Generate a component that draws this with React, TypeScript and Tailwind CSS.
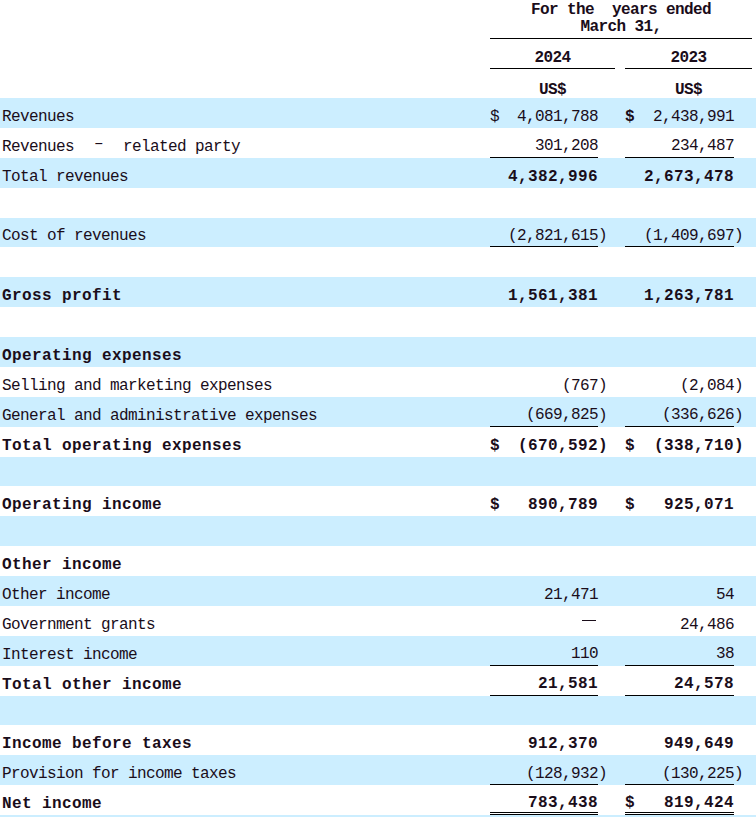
import React from "react";

type Cell = {
  v: string;
  dollar?: boolean;
  dollarBold?: boolean;
  paren?: boolean;
  line?: "single" | "double";
  dash?: boolean;
};

type Row = {
  label?: React.ReactNode;
  labelBold?: boolean;
  valBold?: boolean;
  a?: Cell;
  b?: Cell;
};

const rows: Row[] = [
  {
    label: "Revenues",
    a: { v: "4,081,788", dollar: true },
    b: { v: "2,438,991", dollar: true, dollarBold: true },
  },
  {
    label: (
      <>
        Revenues
        <span className="relative -top-[3px] mx-[20px]">–</span>
        related party
      </>
    ),
    a: { v: "301,208", line: "single" },
    b: { v: "234,487", line: "single" },
  },
  {
    label: "Total revenues",
    valBold: true,
    a: { v: "4,382,996" },
    b: { v: "2,673,478" },
  },
  {},
  {
    label: "Cost of revenues",
    a: { v: "(2,821,615", paren: true, line: "single" },
    b: { v: "(1,409,697", paren: true, line: "single" },
  },
  {},
  {
    label: "Gross profit",
    labelBold: true,
    valBold: true,
    a: { v: "1,561,381" },
    b: { v: "1,263,781" },
  },
  {},
  { label: "Operating expenses", labelBold: true },
  {
    label: "Selling and marketing expenses",
    a: { v: "(767", paren: true },
    b: { v: "(2,084", paren: true },
  },
  {
    label: "General and administrative expenses",
    a: { v: "(669,825", paren: true, line: "single" },
    b: { v: "(336,626", paren: true, line: "single" },
  },
  {
    label: "Total operating expenses",
    labelBold: true,
    valBold: true,
    a: { v: "(670,592", paren: true, dollar: true, dollarBold: true },
    b: { v: "(338,710", paren: true, dollar: true, dollarBold: true },
  },
  {},
  {
    label: "Operating income",
    labelBold: true,
    valBold: true,
    a: { v: "890,789", dollar: true, dollarBold: true },
    b: { v: "925,071", dollar: true, dollarBold: true },
  },
  {},
  { label: "Other income", labelBold: true },
  { label: "Other income", a: { v: "21,471" }, b: { v: "54" } },
  { label: "Government grants", a: { v: "—", dash: true }, b: { v: "24,486" } },
  {
    label: "Interest income",
    a: { v: "110", line: "single" },
    b: { v: "38", line: "single" },
  },
  {
    label: "Total other income",
    labelBold: true,
    valBold: true,
    a: { v: "21,581", line: "single" },
    b: { v: "24,578", line: "single" },
  },
  {},
  {
    label: "Income before taxes",
    labelBold: true,
    valBold: true,
    a: { v: "912,370" },
    b: { v: "949,649" },
  },
  {
    label: "Provision for income taxes",
    a: { v: "(128,932", paren: true, line: "single" },
    b: { v: "(130,225", paren: true, line: "single" },
  },
  {
    label: "Net income",
    labelBold: true,
    valBold: true,
    a: { v: "783,438", line: "double" },
    b: { v: "819,424", dollar: true, dollarBold: true, line: "double" },
  },
];

const Amount = ({
  cell,
  bold,
  wide,
}: {
  cell?: Cell;
  bold?: boolean;
  wide?: boolean;
}) => {
  const lineCls =
    cell?.line === "single"
      ? "border-b border-[#000]"
      : cell?.line === "double"
        ? "border-b-[3px] border-double border-[#000]"
        : "";
  return (
    <div className={`flex h-full ${wide ? "w-[127px]" : "w-[125px]"}`}>
      <div
        className={`flex h-full items-center justify-between pt-[8px] ${wide ? "w-[109px]" : "w-[108px]"} ${lineCls}`}
      >
        <span className={cell?.dollarBold ? "font-bold" : ""}>
          {cell?.dollar ? "$" : ""}
        </span>
        {cell?.dash ? (
          <span className="mb-[8px] mr-[2px] inline-block w-[14px] border-t border-[#1a0d1a]" />
        ) : (
          <span className={bold ? "font-bold tracking-[0.4px]" : ""}>
            {cell?.v}
          </span>
        )}
      </div>
      <div
        className={`flex h-full items-center pt-[8px] ${bold ? "font-bold" : ""}`}
      >
        {cell?.paren ? ")" : ""}
      </div>
    </div>
  );
};

export default function App() {
  return (
    <div className="w-[756px] h-[817px] overflow-hidden bg-white text-[#1a0d1a] font-['Liberation_Mono',monospace] text-[16px] tracking-[-0.6px]">
      {/* column headings */}
      <div className="flex">
        <div className="w-[490px]" />
        <div className="w-[262px]">
          <div className="h-[39px] border-b border-[#000] pt-[2px] text-center font-bold leading-[17px] whitespace-pre">
            <div>For the  years ended</div>
            <div>March 31,</div>
          </div>
          <div className="flex h-[30px]">
            <div className="flex w-[125px] items-center justify-center border-b border-[#000] pt-[9px] font-bold">
              2024
            </div>
            <div className="w-[10px]" />
            <div className="flex w-[127px] items-center justify-center border-b border-[#000] pt-[9px] font-bold">
              2023
            </div>
          </div>
          <div className="flex h-[29px]">
            <div className="flex w-[125px] items-center justify-center pt-[12px] font-bold">
              US$
            </div>
            <div className="w-[10px]" />
            <div className="flex w-[127px] items-center justify-center pt-[12px] font-bold">
              US$
            </div>
          </div>
        </div>
      </div>

      {/* statement rows */}
      {rows.map((r, i) => (
        <div
          key={i}
          className={`flex h-[29.875px] ${i % 2 === 0 ? "bg-[#cceeff]" : "bg-white"}`}
        >
          <div
            className={`flex w-[490px] items-center pl-[2px] pt-[8px] whitespace-pre ${r.labelBold ? "font-bold tracking-[0.4px]" : ""}`}
          >
            {r.label}
          </div>
          <Amount cell={r.a} bold={r.valBold} />
          <div className="w-[10px]" />
          <Amount cell={r.b} bold={r.valBold} wide />
        </div>
      ))}
      <div className="h-[10px] bg-[#cceeff]" />
    </div>
  );
}
